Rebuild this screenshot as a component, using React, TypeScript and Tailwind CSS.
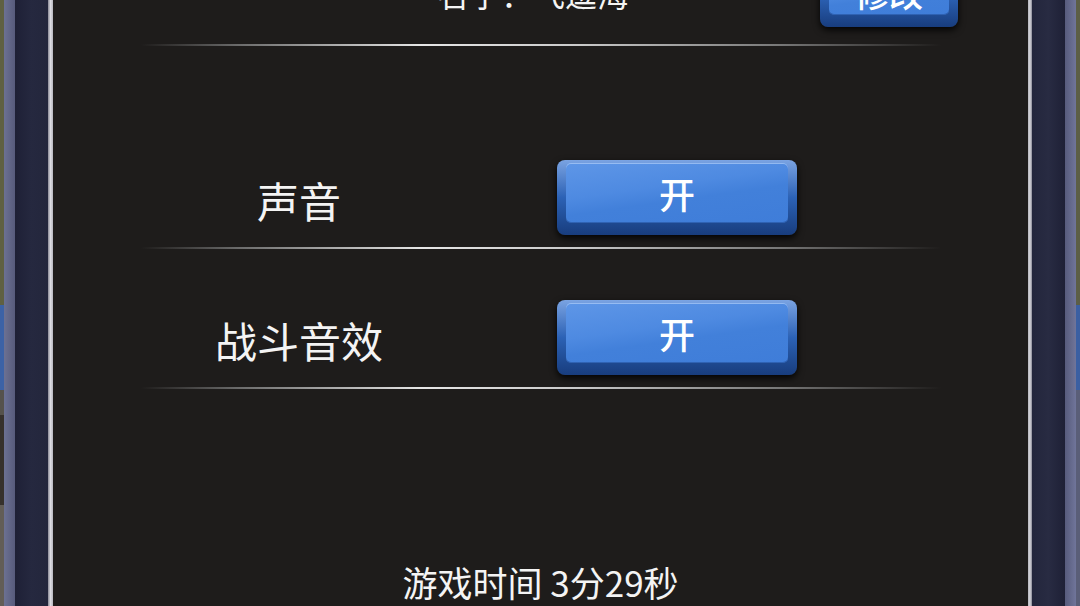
import React from 'react';

const FONT = "font-['Noto_Sans_CJK_SC','Noto_Sans',sans-serif]";

// glossy blue game button
const BlueButton: React.FC<{ label: string; width: string; height: string; textSize: string }> = ({
  label,
  width,
  height,
  textSize,
}) => (
  <div
    className={`${width} ${height} shrink-0 rounded-[8px] bg-gradient-to-b from-[#7aa3e2] via-[#2c62b5] to-[#183d7e] px-[9px] pt-[3px] pb-[12px] shadow-[0_3px_7px_rgba(0,0,0,0.9)]`}
  >
    <div
      className={`flex h-full items-center justify-center rounded-[5px] bg-[linear-gradient(172deg,#5e96e7_0%,#4e8ae1_40%,#4280da_58%,#3f7dd9_100%)] text-white shadow-[inset_0_1px_0_rgba(190,215,250,0.6),inset_0_-1px_0_rgba(30,70,140,0.5)] ${textSize} font-medium leading-none`}
    >
      {label}
    </div>
  </div>
);

const Divider: React.FC<{ className?: string }> = ({ className = '' }) => (
  <div
    className={`mx-auto h-[2px] w-[800px] bg-[linear-gradient(90deg,transparent_0%,#6a6a6a_12%,#e6e6e6_35%,#c9c9c9_55%,#777_80%,transparent_100%)] ${className}`}
  />
);

const SettingRow: React.FC<{ label: string; value: string; className?: string }> = ({ label, value, className = '' }) => (
  <div className={`flex h-[75px] items-center pl-[147px] ${className}`}>
    <div className="w-[198px] pt-[4px] text-center text-[42px] leading-none text-[#f4f4f4]">{label}</div>
    <div className="ml-[159px]">
      <BlueButton label={value} width="w-[240px]" height="h-[75px]" textSize="text-[36px]" />
    </div>
  </div>
);

export default function App() {
  return (
    <div className={`flex h-[606px] w-[1080px] overflow-hidden bg-[#1e1c1b] ${FONT}`}>
      {/* left frame */}
      <div className="flex w-[4px] flex-col">
        <div className="h-[305px] bg-[#5f6042]" />
        <div className="h-[85px] bg-[#3c62a6]" />
        <div className="h-[25px] bg-[#55524c]" />
        <div className="h-[90px] bg-[#36312c]" />
        <div className="flex-1 bg-[#625d57]" />
      </div>
      <div className="w-[11px] bg-gradient-to-r from-[#6c7193] to-[#575b7c]" />
      <div className="w-[33px] bg-gradient-to-r from-[#1e2036] via-[#25283f] to-[#23263c]" />
      <div className="w-[5px] bg-gradient-to-r from-[#8a8a96] via-[#dcdce2] to-[#b6b6be]" />

      {/* settings panel */}
      <div className="flex flex-1 flex-col overflow-hidden bg-[#1e1c1b]">
        <div className="-mt-[33px] flex h-[60px] shrink-0 items-center pl-[384px]">
          <div className="-mt-[8px] w-[383px] text-[32px] leading-none text-[#f4f4f4]">名字：飞逗海</div>
          <BlueButton label="修改" width="w-[138px]" height="h-[60px]" textSize="text-[34px]" />
        </div>
        <Divider className="mt-[17px] shrink-0" />

        <SettingRow label="声音" value="开" className="mt-[114px] shrink-0" />
        <Divider className="mt-[12px] shrink-0" />

        <SettingRow label="战斗音效" value="开" className="mt-[51px] shrink-0" />
        <Divider className="mt-[12px] shrink-0" />

        <div className="mt-[173px] shrink-0 text-center text-[35px] leading-[40px] text-[#f4f4f4]">
          游戏时间 3分29秒
        </div>
      </div>

      {/* right frame */}
      <div className="w-[4px] bg-gradient-to-r from-[#b6b6be] via-[#d6d6dc] to-[#8a8a96]" />
      <div className="w-[33px] bg-gradient-to-r from-[#23263c] via-[#282b42] to-[#1e2036]" />
      <div className="w-[11px] bg-gradient-to-r from-[#575b7c] to-[#70759a]" />
      <div className="flex w-[4px] flex-col">
        <div className="h-[305px] bg-[#5c5e46]" />
        <div className="h-[85px] bg-[#3b5fa2]" />
        <div className="flex-1 bg-[#5a5e78]" />
      </div>
    </div>
  );
}
